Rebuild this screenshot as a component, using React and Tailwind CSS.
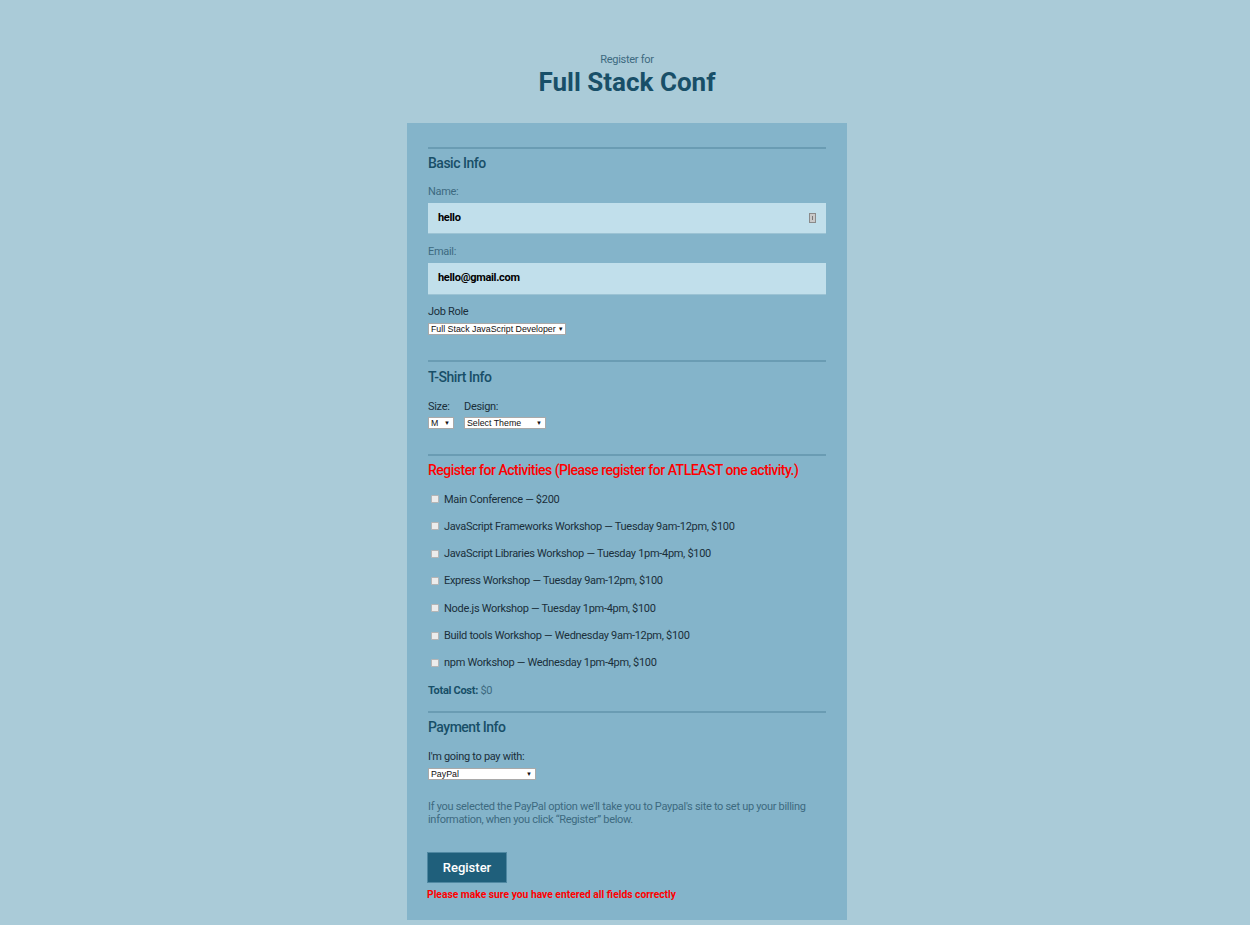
import React from "react";

function FakeSelect({ text, w }) {
  return (
    <div
      className={`flex items-center justify-between gap-[2px] bg-white border border-[#a9a9a9] h-[12px] pl-[2px] pr-[3px] text-[8.8px] leading-none text-[#111] font-['Liberation_Sans',sans-serif] tracking-normal whitespace-nowrap overflow-hidden ${w}`}
    >
      <span>{text}</span>
      <span className="text-[6px]">▼</span>
    </div>
  );
}

function Hr() {
  return <div className="h-[2px] bg-[#6a9cb3] w-full" />;
}

function SectionTitle({ children, red }) {
  return (
    <h2 className={`text-[14px] leading-none font-medium tracking-[-0.5px] whitespace-nowrap ${red ? "text-[#ff0000]" : "text-[#184f68]"}`}>{children}</h2>
  );
}

const activities = [
  "Main Conference — $200",
  "JavaScript Frameworks Workshop — Tuesday 9am-12pm, $100",
  "JavaScript Libraries Workshop — Tuesday 1pm-4pm, $100",
  "Express Workshop — Tuesday 9am-12pm, $100",
  "Node.js Workshop — Tuesday 1pm-4pm, $100",
  "Build tools Workshop — Wednesday 9am-12pm, $100",
  "npm Workshop — Wednesday 1pm-4pm, $100",
];

export default function App() {
  return (
    <div className="min-h-[925px] bg-[#aacbd8] font-['Roboto',sans-serif] flex flex-col items-center pl-[4px]">
      <header className="flex flex-col items-center pt-[54px]">
        <p className="text-[11px] leading-none text-[#3d6a80] tracking-[-0.3px]">Register for</p>
        <h1 className="mt-[4px] text-[26px] leading-none font-bold text-[#184f68]">Full Stack Conf</h1>
      </header>

      <form className="mt-[28px] w-[440px] bg-[#84b4ca] px-[21px] pt-[24px] pb-[20px] flex flex-col tracking-[-0.3px]">
        <Hr />
        <div className="mt-[7px]"><SectionTitle>Basic Info</SectionTitle></div>
        <label className="mt-[16px] text-[11px] leading-none text-[#3d6a80]">Name:</label>
        <div className="mt-[6px] h-[31px] bg-[#c1dfeb] flex items-center justify-between pl-[10px] pr-[10px] border-b border-[#9cc3d4]">
          <span className="text-[11px] font-bold text-black">hello</span>
          <span className="w-[7px] h-[10px] border border-[#8a8a8a] bg-[#c9c9c9] flex items-center justify-center">
            <span className="w-[1px] h-[4px] bg-[#777]" />
          </span>
        </div>
        <label className="mt-[12px] text-[11px] leading-none text-[#3d6a80]">Email:</label>
        <div className="mt-[6px] h-[32px] bg-[#c1dfeb] flex items-center pl-[10px] border-b border-[#9cc3d4]">
          <span className="text-[11px] font-bold text-black">hello@gmail.com</span>
        </div>
        <label className="mt-[11px] text-[11px] leading-none text-[#1a2f3a]">Job Role</label>
        <div className="mt-[6px]"><FakeSelect text="Full Stack JavaScript Developer" w="w-[138px]" /></div>

        <div className="mt-[25px]"><Hr /></div>
        <div className="mt-[8px]"><SectionTitle>T-Shirt Info</SectionTitle></div>
        <div className="mt-[17px] flex gap-[10px]">
          <div className="flex flex-col">
            <span className="text-[11px] leading-none text-[#1a2f3a]">Size:</span>
            <div className="mt-[5px]"><FakeSelect text="M" w="w-[26px]" /></div>
          </div>
          <div className="flex flex-col">
            <span className="text-[11px] leading-none text-[#1a2f3a]">Design:</span>
            <div className="mt-[5px]"><FakeSelect text="Select Theme" w="w-[82px]" /></div>
          </div>
        </div>

        <div className="mt-[25px]"><Hr /></div>
        <div className="mt-[7px]"><SectionTitle red>Register for Activities (Please register for ATLEAST one activity.)</SectionTitle></div>
        <div className="mt-[16px] flex flex-col gap-[15.33px]">
          {activities.map((a) => (
            <label key={a} className="flex items-center h-[12px] text-[11px] leading-none text-[#1a2f3a]">
              <span className="ml-[3px] w-[8px] h-[8px] border border-[#b5b5b5] bg-[#ececec] rounded-[1px]" />
              <span className="ml-[5px]">{a}</span>
            </label>
          ))}
        </div>
        <p className="mt-[16px] text-[11px] leading-none text-[#2a5d74]">
          <span className="font-bold text-[#184f68]">Total Cost:</span> <span className="text-[#3d6a80]">$0</span>
        </p>

        <div className="mt-[15px]"><Hr /></div>
        <div className="mt-[7px]"><SectionTitle>Payment Info</SectionTitle></div>
        <label className="mt-[17px] text-[11px] leading-none text-[#1a2f3a]">I'm going to pay with:</label>
        <div className="mt-[6px]"><FakeSelect text="PayPal" w="w-[108px]" /></div>
        <p className="mt-[20px] text-[11px] leading-[13px] text-[#3d6a80]">
          If you selected the PayPal option we'll take you to Paypal's site to set up your billing information, when you click “Register” below.
        </p>
        <div className="mt-[26px] -ml-[1px]">
          <button type="button" className="w-[80px] h-[31px] bg-[#1f5f7b] border border-[#4f88a2] text-white text-[13px] leading-none font-medium tracking-normal">
            Register
          </button>
        </div>
        <p className="mt-[7px] -ml-[1px] text-[10.3px] leading-none font-bold text-[#ff0000] tracking-normal">Please make sure you have entered all fields correctly</p>
      </form>
      <div className="h-[6px]" />
    </div>
  );
}
